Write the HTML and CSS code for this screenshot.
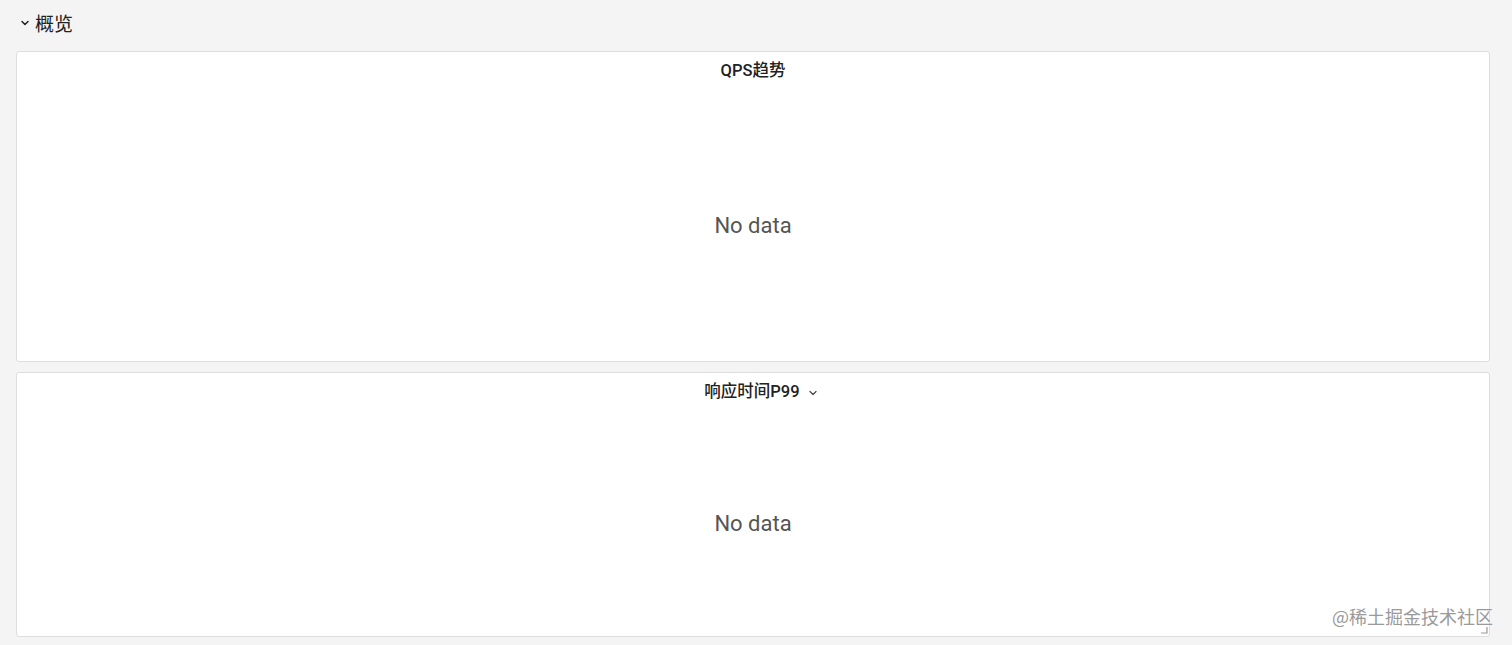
FILE: index.html
```html
<!DOCTYPE html>
<html lang="zh">
<head>
<meta charset="utf-8">
<link rel="stylesheet" href="styles.css">
</head>
<body>
<div class="page">
  <div class="row-header">
    <svg class="row-chevron" width="10" height="10" viewBox="0 0 10 10"><path d="M2 3.5 L5 6.5 L8 3.5" fill="none" stroke="#222" stroke-width="1.5" stroke-linecap="round" stroke-linejoin="round"/></svg>
    <span class="row-title">概览</span>
  </div>
  <div class="panel panel-qps">
    <div class="panel-head"><span class="panel-title">QPS趋势</span></div>
    <div class="panel-body"><span class="nodata">No data</span></div>
  </div>
  <div class="panel panel-p99">
    <div class="panel-head"><span class="panel-title">响应时间P99</span>
      <svg class="title-chevron" width="10" height="10" viewBox="0 0 10 10"><path d="M2 3.5 L5 6.5 L8 3.5" fill="none" stroke="#444" stroke-width="1.2" stroke-linecap="round" stroke-linejoin="round"/></svg>
    </div>
    <div class="panel-body"><span class="nodata">No data</span></div>
    <svg class="resize" width="8" height="8" viewBox="0 0 8 8"><path d="M7 1 V7 H1" fill="none" stroke="#999" stroke-width="1.2"/></svg>
  </div>
</div>
<div class="watermark">@稀土掘金技术社区</div>
</body>
</html>
```
FILE: styles.css
```css
html, body {
  margin: 0;
  padding: 0;
  background: #f4f4f4;
  font-family: Roboto, "Noto Sans CJK SC", sans-serif;
  width: 1512px;
  height: 645px;
  overflow: hidden;
}
.page {
  padding: 0 22px 0 16px;
  display: flex;
  flex-direction: column;
}
.row-header {
  height: 44px;
  display: flex;
  align-items: center;
  gap: 5px;
  padding-left: 4px;
}
.row-chevron { margin-top: 1px; }
.row-title {
  font-size: 19px;
  color: #222;
  font-family: "Noto Sans CJK SC", sans-serif;
}
.panel {
  position: relative;
  background: #fff;
  border: 1px solid #dedede;
  border-radius: 3px;
  display: flex;
  flex-direction: column;
  box-sizing: border-box;
}
.panel-qps { height: 311px; margin-top: 7px; }
.panel-p99 { height: 265px; margin-top: 10px; }
.panel-head {
  height: 38px;
  box-sizing: border-box;
  padding-top: 7px;
  display: flex;
  justify-content: center;
  align-items: flex-start;
  gap: 8px;
  padding-left: 16px;
}
.panel-qps .panel-head { padding-left: 0; }
.panel-title {
  font-size: 16.5px;
  line-height: 24px;
  font-weight: 500;
  color: #222;
  font-family: Roboto, "Noto Sans CJK SC", sans-serif;
}
.title-chevron { margin-top: 8px; }
.panel-body {
  flex: 1;
  display: flex;
  align-items: center;
  justify-content: center;
}
.nodata {
  font-size: 22px;
  color: #555;
}
.resize {
  position: absolute;
  right: 1px;
  bottom: 2px;
}
.watermark {
  position: absolute;
  left: 1332px;
  top: 603px;
  font-size: 18px;
  color: #9a9a9a;
  font-family: "Noto Sans CJK SC", sans-serif;
}
```
